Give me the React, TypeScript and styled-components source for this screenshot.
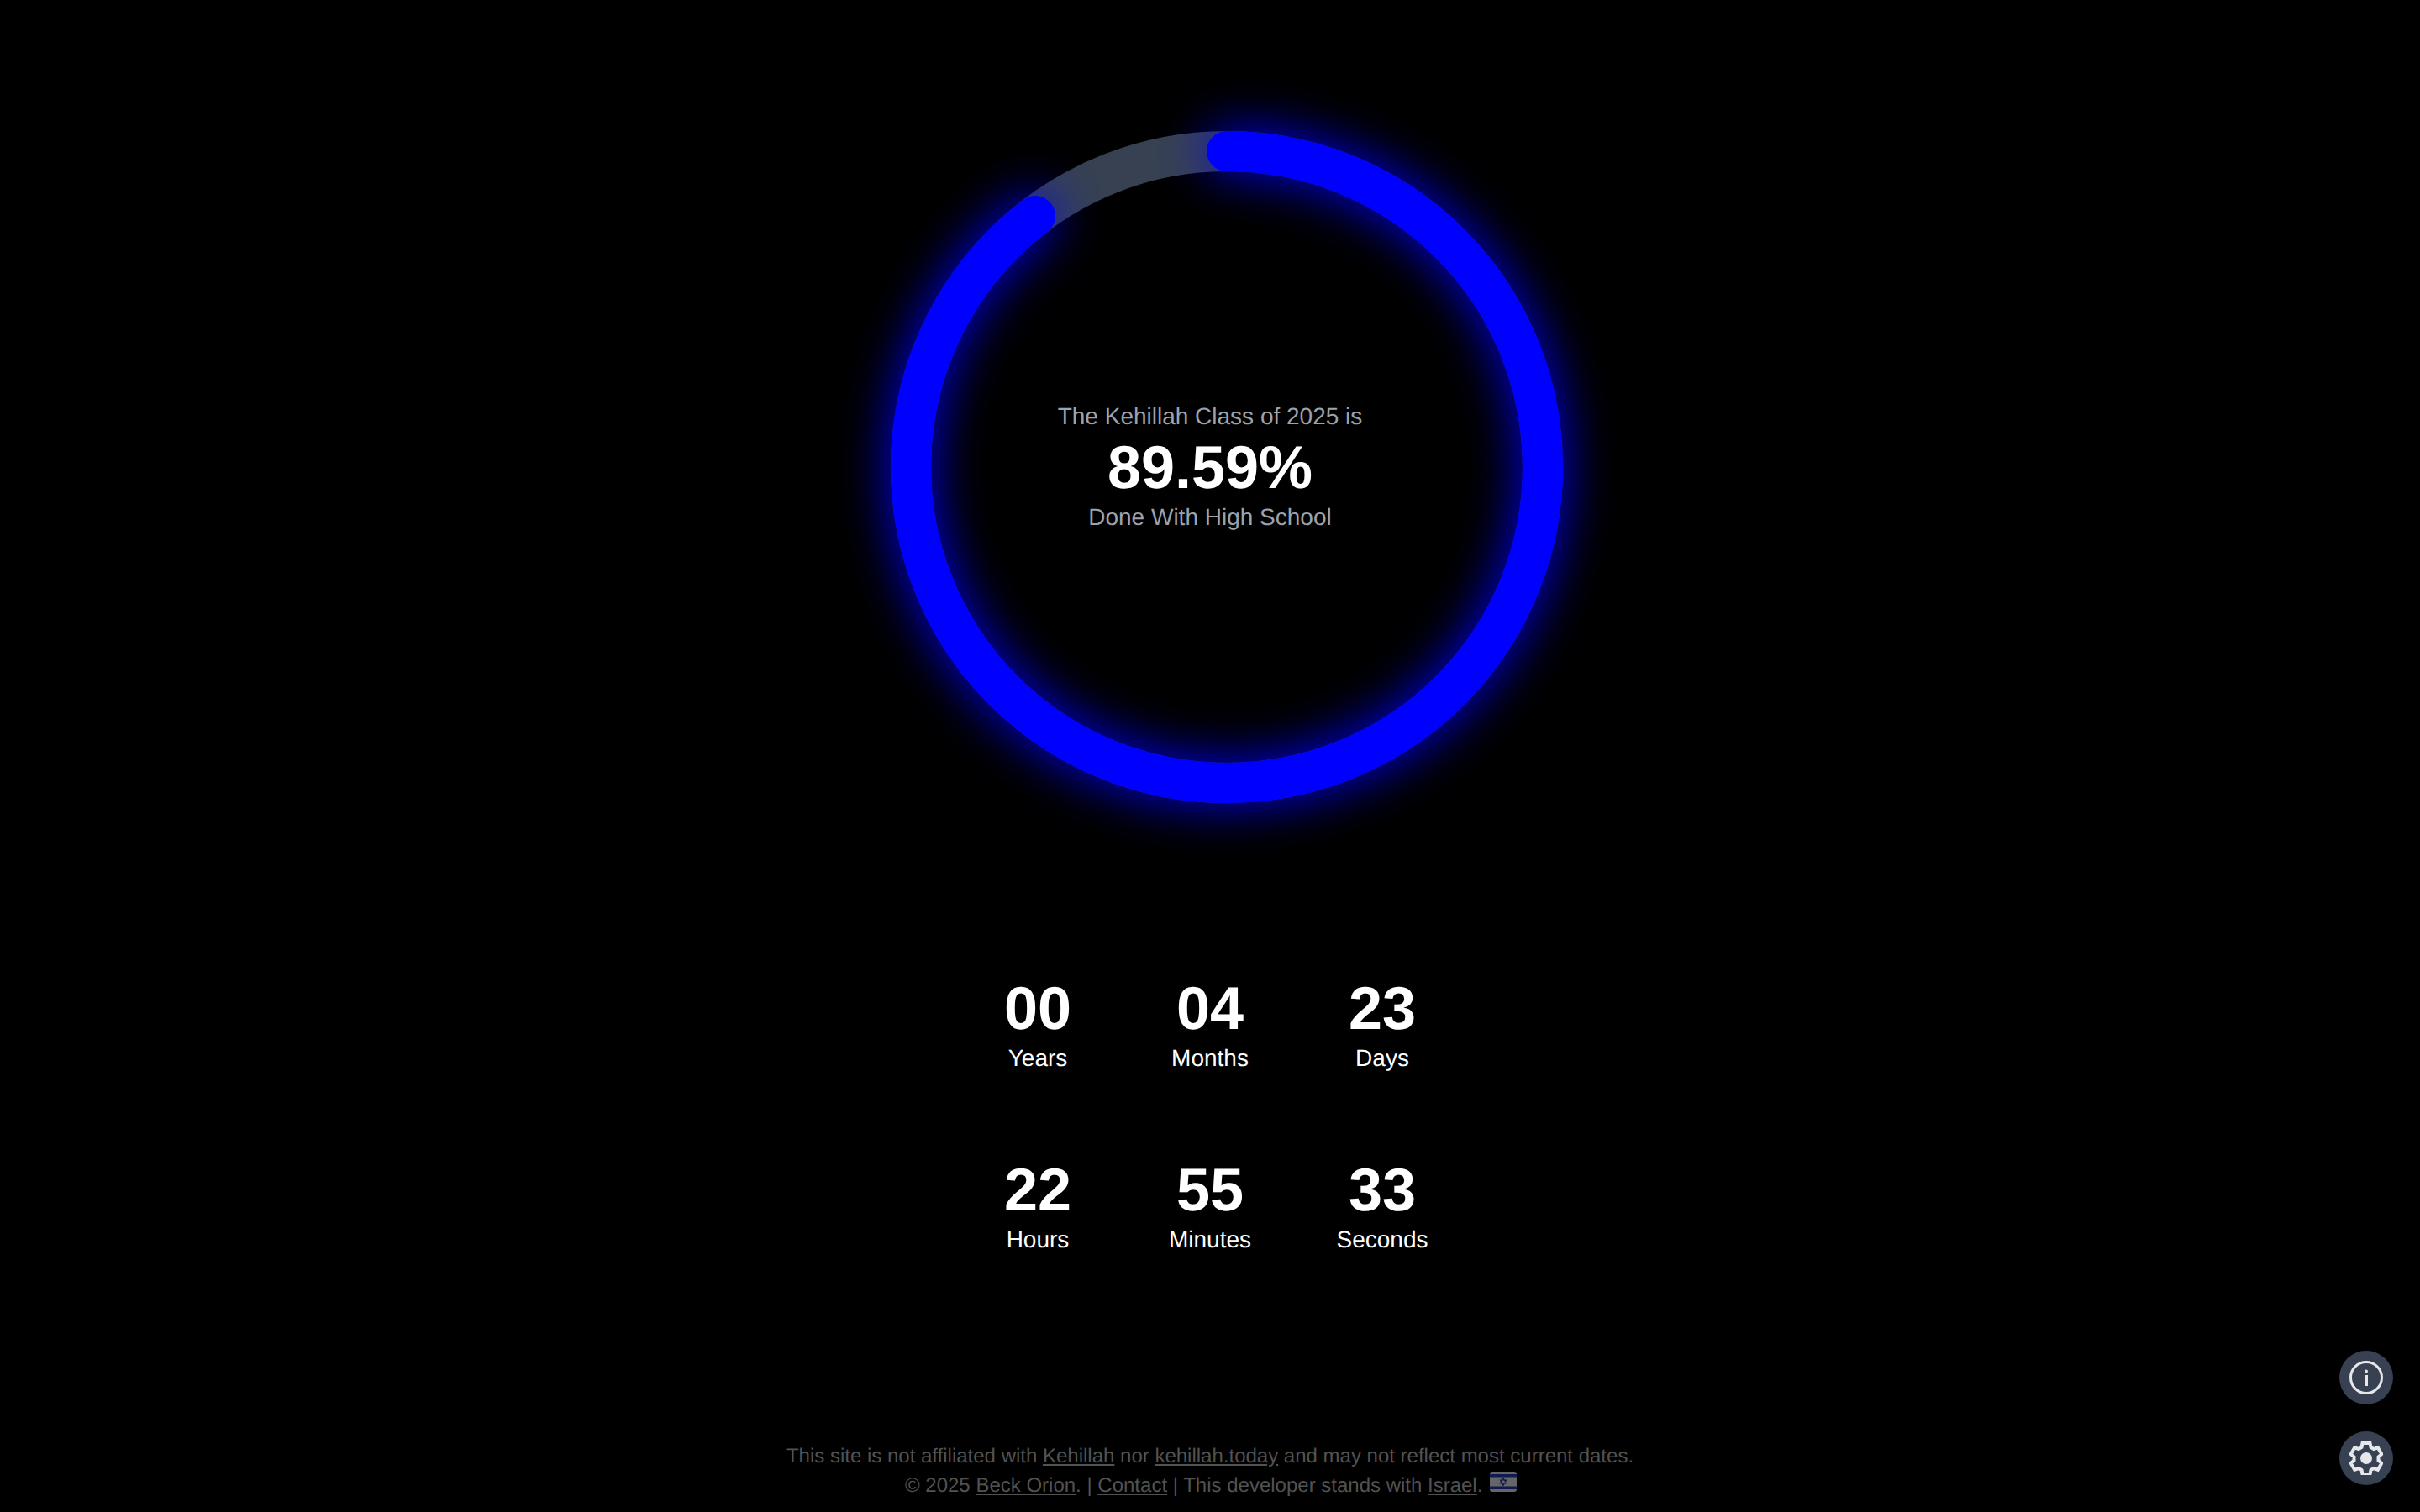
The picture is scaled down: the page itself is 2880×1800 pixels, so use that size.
import React from 'react';
import styled, { createGlobalStyle } from 'styled-components';

const GlobalStyle = createGlobalStyle`
  html, body {
    margin: 0;
    padding: 0;
    background: #000;
    font-family: "Liberation Sans", Arial, sans-serif;
    text-rendering: geometricPrecision;
  }
`;

const PERCENT = 89.59;
const RADIUS = 376;
const CIRCUMFERENCE = 2 * Math.PI * RADIUS;

const counters = [
  { value: '00', label: 'Years' },
  { value: '04', label: 'Months' },
  { value: '23', label: 'Days' },
  { value: '22', label: 'Hours' },
  { value: '55', label: 'Minutes' },
  { value: '33', label: 'Seconds' },
];

const InfoIcon = () => (
  <svg width="40" height="40" viewBox="0 0 40 40" fill="none">
    <circle cx="20" cy="20" r="18.5" stroke="#e5e7eb" strokeWidth="3" />
    <circle cx="20" cy="12.5" r="2" fill="#e5e7eb" />
    <rect x="18" y="17" width="4" height="13" fill="#e5e7eb" />
  </svg>
);

const GearIcon = () => (
  <svg width="40" height="40" viewBox="0 0 40 40" fill="none">
    <path
      d="M15.500 2h9l1 5 3.500 2 4.800-1.700 4.500 7.800-3.800 3.300v4.200l3.800 3.300-4.500 7.800-4.800-1.700-3.500 2-1 5h-9l-1-5-3.500-2-4.800 1.700-4.500-7.800 3.800-3.300v-4.200l-3.800-3.300 4.500-7.800 4.800 1.700 3.500-2z"
      stroke="#e5e7eb"
      strokeWidth="4"
    />
    <circle cx="20" cy="20" r="7" fill="#e5e7eb" />
  </svg>
);

const FlagIcon = () => (
  <svg width="32" height="24" viewBox="0 0 32 24">
    <rect width="32" height="24" rx="3" fill="#666" />
    <rect y="3" width="32" height="3.5" fill="#101a50" />
    <rect y="17.500" width="32" height="3.500" fill="#101a50" />
    <path d="M16 7.500l3.500 6.500h-7z M16 16.500l-3.500-6.500h7z" fill="none" stroke="#101a50" strokeWidth="1.200" />
  </svg>
);

const App = () => (
  <Page>
    <GlobalStyle />
    <RingBox>
      <RingSvg width="880" height="880">
        <Track cx="460" cy="440" r={RADIUS} />
        <Progress
          cx="460"
          cy="440"
          r={RADIUS}
          strokeDasharray={`${(CIRCUMFERENCE * PERCENT) / 100} ${CIRCUMFERENCE}`}
          transform="rotate(-90 460 440)"
        />
      </RingSvg>
      <RingText>
        <Caption>The Kehillah Class of 2025 is</Caption>
        <Percent>{PERCENT}%</Percent>
        <Caption>Done With High School</Caption>
      </RingText>
    </RingBox>

    <CounterGrid>
      {counters.map((e) => (
        <Counter key={e.label}>
          <CounterValue>{e.value}</CounterValue>
          <CounterLabel>{e.label}</CounterLabel>
        </Counter>
      ))}
    </CounterGrid>

    <Footer>
      <FooterLine>
        This site is not affiliated with <FooterLink href="#">Kehillah</FooterLink> nor{' '}
        <FooterLink href="#">kehillah.today</FooterLink> and may not reflect most current dates.
      </FooterLine>
      <FooterLine>
        © 2025 <FooterLink href="#">Beck Orion</FooterLink>. | <FooterLink href="#">Contact</FooterLink> | This
        developer stands with <FooterLink href="#">Israel</FooterLink>. <FlagWrap><FlagIcon /></FlagWrap>
      </FooterLine>
    </Footer>

    <FloatingButtons>
      <RoundButton aria-label="Info"><InfoIcon /></RoundButton>
      <RoundButton aria-label="Settings"><GearIcon /></RoundButton>
    </FloatingButtons>
  </Page>
);

const Page = styled.div`
  position: relative;
  box-sizing: border-box;
  height: 1800px;
  padding-top: 116px;
  display: flex;
  flex-direction: column;
  align-items: center;
  background: #000;
  overflow: hidden;
`;

const RingBox = styled.div`
  position: relative;
  width: 880px;
  height: 880px;
  flex-shrink: 0;
`;

const RingSvg = styled.svg`
  display: block;
  overflow: visible;
`;

const Track = styled.circle`
  fill: none;
  stroke: #374151;
  stroke-width: 48;
`;

const Progress = styled.circle`
  fill: none;
  stroke: #0000ff;
  stroke-width: 48;
  stroke-linecap: round;
  filter: drop-shadow(0 0 30px #0000ff);
`;

const RingText = styled.div`
  position: absolute;
  inset: 0;
  display: flex;
  flex-direction: column;
  align-items: center;
  justify-content: center;
  text-align: center;
`;

const Caption = styled.div`
  font-size: 28px;
  line-height: 36px;
  color: #9ca3af;
`;

const Percent = styled.div`
  padding-top: 2px;
  font-size: 72px;
  line-height: 82px;
  font-weight: 700;
  color: #fff;
`;

const CounterGrid = styled.div`
  margin-top: 169px;
  display: grid;
  grid-template-columns: repeat(3, 205px);
  row-gap: 103px;
`;

const Counter = styled.div`
  display: flex;
  flex-direction: column;
  align-items: center;
  color: #fff;
`;

const CounterValue = styled.div`
  font-size: 72px;
  line-height: 72px;
  font-weight: 700;
`;

const CounterLabel = styled.div`
  font-size: 28px;
  line-height: 36px;
  margin-top: 5px;
`;

const Footer = styled.div`
  margin-top: auto;
  padding-bottom: 14px;
  text-align: center;
  font-size: 24px;
  line-height: 35px;
  color: #525252;
`;

const FooterLine = styled.div``;

const FooterLink = styled.a`
  color: inherit;
  text-decoration: underline;
`;

const FlagWrap = styled.span`
  display: inline-block;
  vertical-align: 0;
  height: 24px;
  margin-left: 2px;
  margin-right: -2px;
`;

const FloatingButtons = styled.div`
  position: absolute;
  right: 32px;
  bottom: 32px;
  display: flex;
  flex-direction: column;
  gap: 32px;
`;

const RoundButton = styled.button`
  width: 64px;
  height: 64px;
  padding: 0;
  border: none;
  border-radius: 50%;
  background: #374151;
  display: flex;
  align-items: center;
  justify-content: center;
`;

export default App;
